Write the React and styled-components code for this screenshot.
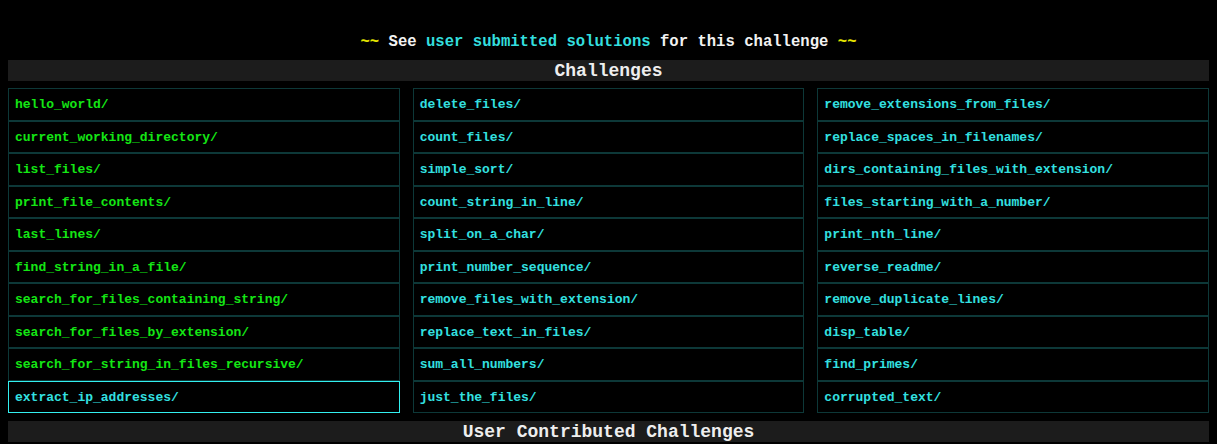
import React from "react";
import styled, { createGlobalStyle } from "styled-components";

const GlobalStyle = createGlobalStyle`
  body {
    margin: 8px;
    background-color: #000000;
    font-family: "Liberation Mono", "Courier New", monospace;
    font-weight: bold;
  }
`;

const Page = styled.div`
  display: flex;
  flex-direction: column;
`;

const Banner = styled.p`
  margin: 25px 0 9px 0;
  text-align: center;
  font-size: 15.6px;
  line-height: 18px;
  color: #f2f2f2;
  white-space: pre;

  .squiggle {
    color: #e6e600;
  }

  a {
    color: #33dede;
    text-decoration: none;
  }
`;

const SectionBar = styled.div`
  background-color: #1c1c1c;
  color: #eeeeee;
  text-align: center;
  font-size: 18px;
  line-height: 22px;
  height: 21px;
`;

const Grid = styled.div`
  display: grid;
  grid-template-columns: repeat(3, 1fr);
  column-gap: 13px;
  margin: 7px 0 8px 0;
`;

const Column = styled.div`
  display: flex;
  flex-direction: column;
`;

const Item = styled.a`
  display: block;
  border: 1px solid ${(p) => (p.$active ? "#33f0f0" : "#0d3838")};
  padding: 9px 6px 7px 6px;
  font-size: 13px;
  line-height: 14.5px;
  color: ${(p) => (p.$green ? "#14e614" : "#33e0e0")};
  text-decoration: none;
  white-space: nowrap;
`;

const columns = [
  [
    "hello_world/",
    "current_working_directory/",
    "list_files/",
    "print_file_contents/",
    "last_lines/",
    "find_string_in_a_file/",
    "search_for_files_containing_string/",
    "search_for_files_by_extension/",
    "search_for_string_in_files_recursive/",
    "extract_ip_addresses/",
  ],
  [
    "delete_files/",
    "count_files/",
    "simple_sort/",
    "count_string_in_line/",
    "split_on_a_char/",
    "print_number_sequence/",
    "remove_files_with_extension/",
    "replace_text_in_files/",
    "sum_all_numbers/",
    "just_the_files/",
  ],
  [
    "remove_extensions_from_files/",
    "replace_spaces_in_filenames/",
    "dirs_containing_files_with_extension/",
    "files_starting_with_a_number/",
    "print_nth_line/",
    "reverse_readme/",
    "remove_duplicate_lines/",
    "disp_table/",
    "find_primes/",
    "corrupted_text/",
  ],
];

const active = "extract_ip_addresses/";

export default function App() {
  return (
    <Page>
      <GlobalStyle />
      <Banner>
        <span className="squiggle">~~</span> See{" "}
        <a href="#">user submitted solutions</a> for this challenge{" "}
        <span className="squiggle">~~</span>
      </Banner>
      <SectionBar>Challenges</SectionBar>
      <Grid>
        {columns.map((col, ci) => (
          <Column key={ci}>
            {col.map((name) => (
              <Item
                key={name}
                href="#"
                $green={ci === 0 && name !== active}
                $active={name === active}
              >
                {name}
              </Item>
            ))}
          </Column>
        ))}
      </Grid>
      <SectionBar>User Contributed Challenges</SectionBar>
    </Page>
  );
}
